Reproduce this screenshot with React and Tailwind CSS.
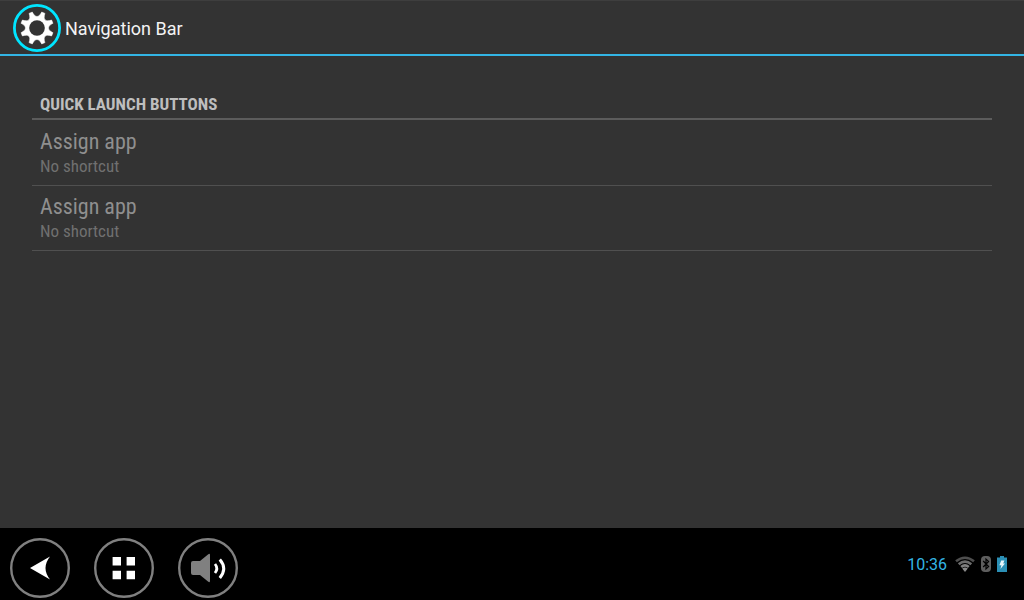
const quickLaunchSlots = [
  { id: 1, title: "Assign app", summary: "No shortcut" },
  { id: 2, title: "Assign app", summary: "No shortcut" },
]

function gearPath() {
  const point = (radius, angle) => {
    const rad = (angle * Math.PI) / 180
    return `${(24 + radius * Math.cos(rad)).toFixed(2)} ${(24 + radius * Math.sin(rad)).toFixed(2)}`
  }
  let d = `M${point(16.6, 16.5)}`
  for (let i = 0; i < 8; i++) {
    const tooth = 22.5 + i * 45
    d += `L${point(16.6, tooth + 6)}C${point(10.2, tooth + 12)} ${point(10.2, tooth + 33)} ${point(16.6, tooth + 39)}`
  }
  return d + "Z"
}

function GearIcon() {
  return (
    <svg viewBox="0 0 48 48" className="size-12" aria-hidden="true">
      <circle cx="24" cy="24" r="22.6" fill="none" stroke="#00e5ff" strokeWidth="2.8" />
      <path d={gearPath()} fill="#fff" stroke="#fff" strokeWidth="0.6" strokeLinejoin="round" />
      <circle cx="24" cy="24" r="7.8" fill="#333" />
    </svg>
  )
}

function NavButton({ label, children }) {
  return (
    <button type="button" aria-label={label} className="size-15 rounded-full">
      <svg viewBox="0 0 60 60" className="size-full" aria-hidden="true">
        <circle cx="30" cy="30" r="28.8" fill="none" stroke="#808080" strokeWidth="2.4" />
        {children}
      </svg>
    </button>
  )
}

function WifiIcon() {
  return (
    <svg viewBox="0 0 20 16" className="h-4 w-5" aria-hidden="true">
      <g fill="none" strokeWidth="2.6">
        <path d="M1 5.3Q10 -1.8 19 5.3" stroke="#4e4e4e" />
        <path d="M3.7 8.3Q10 3 16.3 8.3" stroke="#6c6c6c" />
        <path d="M6.2 11Q10 7.8 13.8 11" stroke="#808080" />
      </g>
      <path d="M7.2 12.6Q10 10.6 12.8 12.6L10 16Z" fill="#8a8a8a" />
    </svg>
  )
}

function BluetoothIcon() {
  return (
    <svg viewBox="0 0 10 16" className="h-4 w-[10px]" aria-hidden="true">
      <rect width="10" height="16" rx="4" fill="#5e5e5e" />
      <path d="M2.2 5L7.6 10.6L5 13V3L7.6 5.4L2.2 11" fill="none" stroke="#000" strokeWidth="1.2" />
    </svg>
  )
}

function BatteryIcon() {
  return (
    <svg viewBox="0 0 10 16" className="h-4 w-[10px]" aria-hidden="true">
      <path d="M3 0H7V1.5H10V16H0V1.5H3Z" fill="#2b8fb5" />
      <path d="M4.2 4.6H7.4L6.2 7.4H8L3.4 13L4.4 9.2H2.4Z" fill="#e8f6fb" />
    </svg>
  )
}

export default function App() {
  return (
    <div className="flex min-h-screen flex-col bg-[#333]">
      <header className="flex h-14 items-center gap-1 border-t border-b-2 border-t-[#3e3e3e] border-b-[#33b5e5] px-[13px]">
        <GearIcon />
        <h1 className="pt-0.5 font-[Roboto,sans-serif] text-lg text-[#f3f3f3]">Navigation Bar</h1>
      </header>

      <main className="flex-1 px-8 pt-9 font-['Roboto_Condensed',Roboto,sans-serif]">
        <h2 className="border-b-2 border-[#5c5c5c] px-2 pb-0.5 text-[17px] leading-6 font-bold text-[#bebebe]">
          QUICK LAUNCH BUTTONS
        </h2>
        <ul className="pt-px">
          {quickLaunchSlots.map((slot) => (
            <li key={slot.id} className="border-b border-[#505050]">
              <button type="button" className="block h-16 w-full px-2 pb-0.5 text-left">
                <span className="block text-[22px] leading-7 text-[#8f8f8f]">{slot.title}</span>
                <span className="block text-[17px] leading-5 text-[#707070]">{slot.summary}</span>
              </button>
            </li>
          ))}
        </ul>
      </main>

      <footer className="flex h-18 items-center justify-between bg-black pt-2 pr-[17px] pl-[10px]">
        <nav className="flex gap-6" aria-label="System">
          <NavButton label="Back">
            <path d="M20 30L40 18.5Q31 30 40 41.5Z" fill="#fff" />
          </NavButton>
          <NavButton label="All apps">
            <path d="M18.6 19h8.4v8.4h-8.4zM32.6 19h8.4v8.4h-8.4zM18.6 32.8h8.4v8.4h-8.4zM32.6 32.8h8.4v8.4h-8.4z" fill="#fff" />
          </NavButton>
          <NavButton label="Volume">
            <path d="M15 23H22L30 16.5Q32 15 32 17V43Q32 45 30 43.5L22 37H15Q13 37 13 35V25Q13 23 15 23Z" fill="#808080" />
            <path d="M37 26Q40.6 30.5 37 35" fill="none" stroke="#fff" strokeWidth="2.8" />
            <path d="M41.8 21.5Q49.6 30.5 41.8 40" fill="none" stroke="#fff" strokeWidth="3" />
          </NavButton>
        </nav>
        <div className="flex items-center pb-2">
          <time className="mr-2 pt-px font-[Roboto,sans-serif] text-base text-[#33b5e5]">10:36</time>
          <div className="flex items-center gap-[6px]">
            <WifiIcon />
            <BluetoothIcon />
            <BatteryIcon />
          </div>
        </div>
      </footer>
    </div>
  )
}
